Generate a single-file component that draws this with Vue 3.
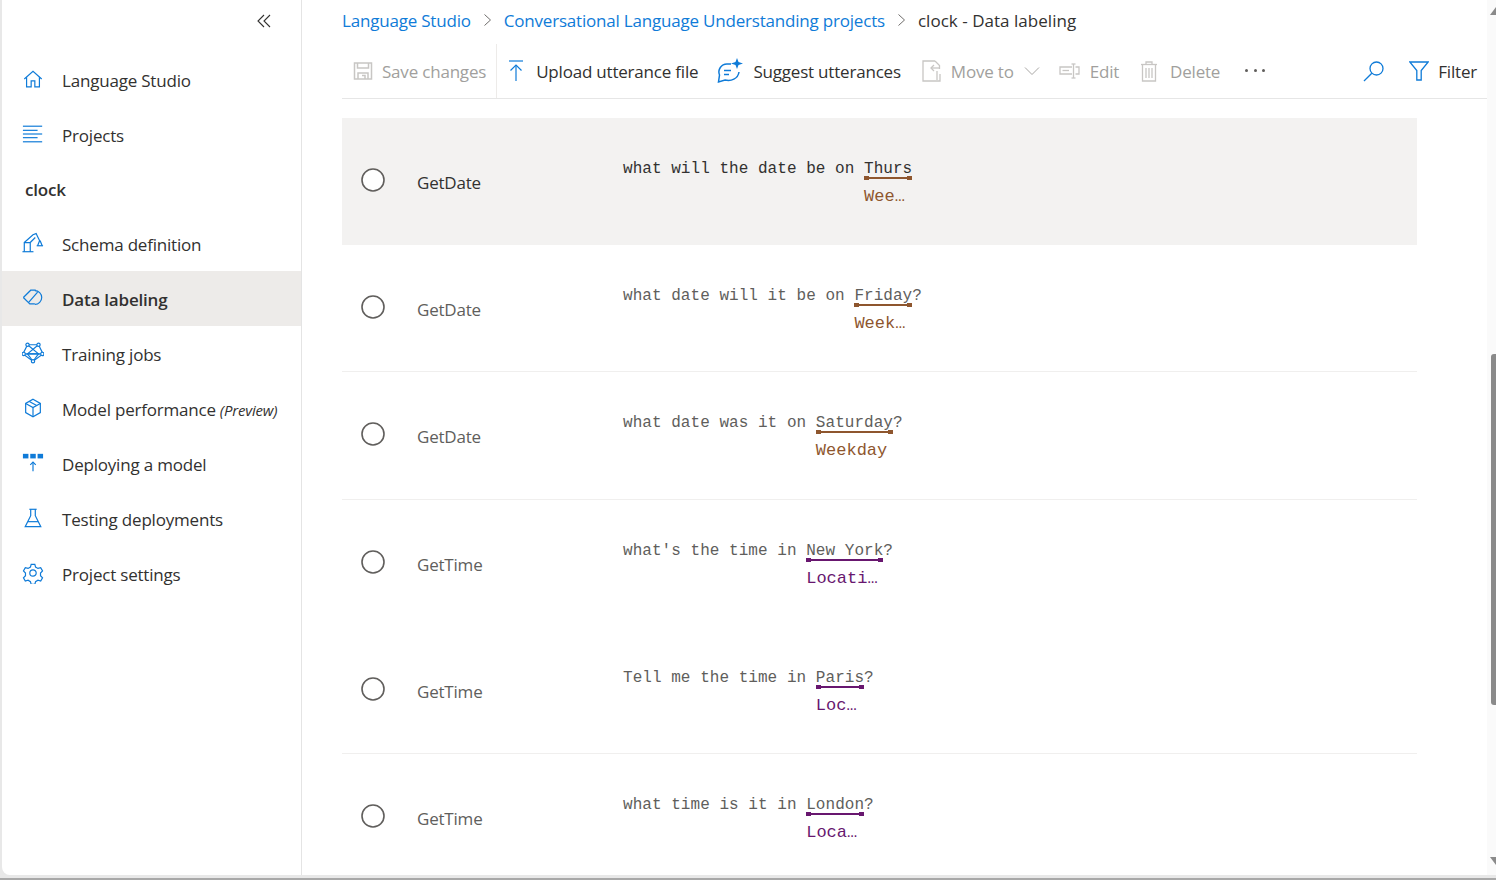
<script setup>
// Menú lateral: cada icono es una lista de trazos sobre una caja de 24x24
const menu = [
  { texto: 'Language Studio', icono: ['M2.5 12 12 3.5 21.5 12', 'M5 10v10.5h5V14h4v6.5h5V10'] },
  { texto: 'Projects', icono: ['M1 3.5h21', 'M1 8h16', 'M1 12h21', 'M1 16h16', 'M1 20.5h21'] },
  { titulo: 'clock' },
  {
    texto: 'Schema definition',
    icono: ['M.5 21.5h12', 'M2.5 21.5v-10h6.5v10', 'M2.5 11.5 12 3l4-1.5', 'M9 11.5 14.5 6', 'M15.5 2l4 8', 'M17 15l2-5 1 0 2 5', 'M16 15h7'],
  },
  {
    texto: 'Data labeling',
    activo: true,
    icono: ['M1.5 11.5 9.5 3.5H15', 'M1.5 11.5l7 7h5.5', 'M14 4a7.5 7.5 0 0 1 0 15', 'M7 17 17 5.5'],
  },
  {
    texto: 'Training jobs',
    icono: ['M6 3h12l5 10-11 8L1 13z', 'M6 3l12 10H1', 'M18 3 6 13h17', 'M12 21l-6-8', 'M12 21l6-8'],
    puntos: [[6, 3], [18, 3], [1.8, 13], [22.2, 13], [12, 21]],
  },
  { texto: 'Model performance', nota: '(Preview)', icono: ['M12 2.5 20 7v10l-8 4.5L4 17V7z', 'M4 7l8 4.5L20 7', 'M12 11.5v10', 'M8 4.8l8 4.5'] },
  { texto: 'Deploying a model', icono: ['M12 11v10', 'M9 14l3-3 3 3'], bloques: true },
  { texto: 'Testing deployments', icono: ['M8 2.5h8', 'M9.5 2.5v7L3.5 21.5h17L14.5 9.5v-7', 'M6.5 16h11'] },
  {
    texto: 'Project settings',
    icono: [
      'M10 2.5h4l.8 3 2.6 1.5 3-.8 2 3.5-2.2 2.3v3l2.2 2.2-2 3.5-3-.8-2.6 1.5-.8 3h-4l-.8-3-2.6-1.5-3 .8-2-3.5 2.2-2.2v-3L1.6 9.7l2-3.5 3 .8L9.2 5.5z',
      'M15.5 12a3.5 3.5 0 1 1-7 0 3.5 3.5 0 0 1 7 0z',
    ],
  },
]

const cafe = '#8e562e'
const morado = '#68176f'

const filas = [
  { intencion: 'GetDate', antes: 'what will the date be on ', entidad: 'Thurs', despues: '', etiqueta: 'Wee…', color: cafe, activa: true },
  { intencion: 'GetDate', antes: 'what date will it be on ', entidad: 'Friday', despues: '?', etiqueta: 'Week…', color: cafe },
  { intencion: 'GetDate', antes: 'what date was it on ', entidad: 'Saturday', despues: '?', etiqueta: 'Weekday', color: cafe },
  { intencion: 'GetTime', antes: "what's the time in ", entidad: 'New York', despues: '?', etiqueta: 'Locati…', color: morado, sinBorde: true },
  { intencion: 'GetTime', antes: 'Tell me the time in ', entidad: 'Paris', despues: '?', etiqueta: 'Loc…', color: morado },
  { intencion: 'GetTime', antes: 'what time is it in ', entidad: 'London', despues: '?', etiqueta: 'Loca…', color: morado },
]
</script>

<template>
  <div class="ventana">
    <aside class="lateral">
      <button class="colapsar">
        <svg width="16" height="16" viewBox="0 0 16 16" fill="none" stroke="#323130" stroke-width="1.1">
          <path d="M8 2 2 8l6 6" />
          <path d="M14 2 8 8l6 6" />
        </svg>
      </button>
      <nav class="menu">
        <template v-for="item in menu" :key="item.texto || item.titulo">
          <div v-if="item.titulo" class="menu-titulo">{{ item.titulo }}</div>
          <a v-else class="menu-item" :class="{ activo: item.activo }">
            <svg class="menu-icono" width="22" height="22" viewBox="0 0 24 24" fill="none" stroke="#0f7bd8" stroke-width="1.3">
              <path v-for="d in item.icono" :key="d" :d="d" />
              <circle v-for="p in item.puntos" :key="p[0] + '-' + p[1]" :cx="p[0]" :cy="p[1]" r="1.8" fill="#fff" />
              <g v-if="item.bloques" fill="#0f7bd8" stroke="none">
                <rect x="1" y="2" width="6" height="5" />
                <rect x="9" y="2" width="6" height="5" />
                <rect x="17" y="2" width="6" height="5" />
              </g>
            </svg>
            <span>{{ item.texto }}</span>
            <em v-if="item.nota" class="nota">{{ item.nota }}</em>
          </a>
        </template>
      </nav>
    </aside>

    <main class="principal">
      <div class="migas">
        <a class="miga-enlace">Language Studio</a>
        <svg class="miga-sep" width="12" height="16" viewBox="0 0 12 16" fill="none" stroke="#6f6d6b" stroke-width="1"><path d="M2.5 2.5 8.5 8l-6 5.5" /></svg>
        <a class="miga-enlace">Conversational Language Understanding projects</a>
        <svg class="miga-sep" width="12" height="16" viewBox="0 0 12 16" fill="none" stroke="#6f6d6b" stroke-width="1"><path d="M2.5 2.5 8.5 8l-6 5.5" /></svg>
        <span class="miga-actual">clock - Data labeling</span>
      </div>

      <div class="barra">
        <div class="accion apagada guardar">
          <svg width="20" height="20" viewBox="0 0 20 20" fill="none" stroke="#c8c6c4" stroke-width="1.5">
            <path d="M1.5 2h17v16h-17z" />
            <path d="M4.5 2v5h11V2" />
            <path d="M5 18v-6h10v6" />
            <path d="M9 14.5h3V18" />
          </svg>
          <span>Save changes</span>
        </div>
        <div class="accion subir">
          <svg width="16" height="22" viewBox="0 0 16 22" fill="none" stroke="#0f7bd8" stroke-width="1.2">
            <path d="M1 1h14" />
            <path d="M8 21V5" />
            <path d="M2.5 10.5 8 5l5.5 5.5" />
          </svg>
          <span>Upload utterance file</span>
        </div>
        <div class="accion sugerir">
          <svg width="26" height="26" viewBox="0 0 26 26" fill="none" stroke="#0f7bd8" stroke-width="1.5">
            <path d="M14 6H10a8 8 0 0 0-7.5 11L1.5 24l6.5-2c6 1.5 13-1 14-8" />
            <path d="M7 12.5h7" />
            <path d="M7 16.5h5" />
            <path d="M20 0l1.5 4 4.500 1.500-4.500 1.500L20 11l-1.500-4L14 5.500 18.500 4z" fill="#0f7bd8" stroke="none" />
          </svg>
          <span>Suggest utterances</span>
        </div>
        <div class="accion apagada mover">
          <svg width="20" height="22" viewBox="0 0 20 22" fill="none" stroke="#c8c6c4" stroke-width="1.3">
            <path d="M13 1H1v20h17v-7" />
            <path d="M13 1l4.5 4.5V9" />
            <path d="M9 8h9" />
            <path d="M12 5 9 8l3 3" />
            <path d="M15 11v9" />
          </svg>
          <span>Move to</span>
          <svg class="flecha" width="16" height="10" viewBox="0 0 16 10" fill="none" stroke="#a8a6a4" stroke-width="1"><path d="M1 1.5 8 8.5l7-7" /></svg>
        </div>
        <div class="accion apagada editar">
          <svg width="21" height="16" viewBox="0 0 21 16" fill="none" stroke="#c8c6c4" stroke-width="1.3">
            <path d="M13 4H1v7h12" />
            <path d="M3.5 7.5H10" />
            <path d="M14.5 1v14" />
            <path d="M12.5 1h4" />
            <path d="M12.5 15h4" />
            <path d="M16.5 4H20v7h-3.5" />
          </svg>
          <span>Edit</span>
        </div>
        <div class="accion apagada borrar">
          <svg width="16" height="21" viewBox="0 0 16 21" fill="none" stroke="#c8c6c4" stroke-width="1.3">
            <path d="M0 3.5h16" />
            <path d="M5 3.5V1h6v2.5" />
            <path d="M1.5 3.5V20h13V3.5" />
            <path d="M5 7v10" />
            <path d="M8 7v10" />
            <path d="M11 7v10" />
          </svg>
          <span>Delete</span>
        </div>
        <div class="puntos"><i /><i /><i /></div>
        <div class="barra-derecha">
          <svg class="lupa" width="21" height="21" viewBox="0 0 21 21" fill="none" stroke="#0f7bd8" stroke-width="1.3">
            <circle cx="13.5" cy="7.5" r="6.5" />
            <path d="M8.8 12.2 1 20" />
          </svg>
          <div class="accion filtro">
            <svg width="20" height="20" viewBox="0 0 20 20" fill="none" stroke="#0f7bd8" stroke-width="1.3">
              <path d="M.8 1h18.4l-7 8.5V19H7.800V9.500z" />
            </svg>
            <span>Filter</span>
          </div>
        </div>
      </div>

      <div class="lista">
        <div
          v-for="fila in filas"
          :key="fila.antes"
          class="fila"
          :class="{ activa: fila.activa, 'sin-borde': fila.sinBorde }"
        >
          <svg class="radio" width="24" height="24" viewBox="0 0 24 24" fill="#fff" stroke="#605e5c" stroke-width="1.6">
            <circle cx="12" cy="12" r="11" />
          </svg>
          <span class="intencion">{{ fila.intencion }}</span>
          <div class="frase">{{ fila.antes }}<span class="entidad">{{ fila.entidad }}<span class="marca" :style="{ background: fila.color }" /><span class="etiqueta" :style="{ color: fila.color }">{{ fila.etiqueta }}</span></span>{{ fila.despues }}</div>
        </div>
      </div>
    </main>

    <div class="scroll">
      <span class="scroll-arriba" />
      <div class="scroll-pista"><span class="scroll-pulgar" /></div>
      <span class="scroll-abajo" />
    </div>
  </div>
</template>

<style>
html,
body {
  margin: 0;
  height: 880px;
  overflow: hidden;
  background: linear-gradient(#e8e8e8 878px, #a8a8a8 878px);
}
</style>

<style scoped>
.ventana {
  box-sizing: border-box;
  width: 1494px;
  height: 875px;
  margin-left: 2px;
  display: flex;
  background: #fff;
  border-bottom-left-radius: 8px;
  overflow: hidden;
  font-family: "Open Sans", "Noto Sans", sans-serif;
  font-size: 17px;
  color: #323130;
  letter-spacing: -0.2px;
}

.lateral {
  width: 299px;
  flex: none;
  border-right: 1px solid #e4e4e4;
  height: 100%;
}

.colapsar {
  display: block;
  margin: 13px 0 0 254px;
  padding: 0;
  background: none;
  border: 0;
  height: 16px;
}

.menu {
  margin-top: 23px;
  display: flex;
  flex-direction: column;
}

.menu-item,
.menu-titulo {
  display: flex;
  align-items: center;
}

.menu-item {
  height: 55px;
  box-sizing: border-box;
  padding: 2px 0 0 20px;
}

.menu-item.activo {
  background: #edebe9;
  font-weight: 600;
}

.menu-icono {
  width: 22px;
  flex: none;
  margin-right: 18px;
  position: relative;
  top: -2px;
}

.menu-titulo {
  padding-left: 23px;
  font-weight: 600;
  height: 54px;
}

.nota {
  font-size: 15px;
  margin-left: 4px;
}

.principal {
  flex: none;
  width: 1145px;
  padding-left: 40px;
  min-width: 0;
}

.migas {
  height: 40px;
  margin-bottom: 4px;
  display: flex;
  align-items: center;
  white-space: nowrap;
}

.miga-enlace {
  color: #0f7bd8;
}

.miga-actual {
  letter-spacing: 0.03px;
}

.miga-sep {
  margin: 0 10px 0 11px;
}

.barra {
  height: 55px;
  box-sizing: border-box;
  border-bottom: 1px solid #e6e6e6;
  display: flex;
  align-items: center;
  white-space: nowrap;
}

.accion {
  display: flex;
  align-items: center;
  height: 100%;
}

.accion svg {
  flex: none;
  margin-right: 9px;
}

.apagada {
  color: #a19f9d;
}

.guardar {
  padding: 0 10px 0 11px;
  border-right: 1px solid #edebe9;
}

.subir {
  margin-left: 11px;
}

.subir svg {
  margin-right: 12px;
}

.sugerir {
  margin-left: 19px;
}

.sugerir svg {
  margin-right: 10px;
}

.mover {
  margin-left: 21px;
}

.accion .flecha {
  margin: 0 0 0 10px;
}

.editar {
  margin-left: 19px;
}

.editar svg {
  margin-right: 10px;
}

.borrar {
  margin-left: 22px;
}

.borrar svg {
  margin-right: 13px;
}

.puntos {
  display: flex;
  gap: 5.5px;
  margin: -2px 0 0 25px;
}

.puntos i {
  width: 3px;
  height: 3px;
  border-radius: 50%;
  background: #605e5c;
}

.barra-derecha {
  margin-left: auto;
  display: flex;
  align-items: center;
  height: 100%;
}

.lupa {
  margin-right: 25px;
}

.filtro {
  padding-right: 10px;
}

.filtro svg {
  margin-right: 9px;
}

.lista {
  width: 1075px;
  margin-top: 19px;
}

.fila {
  height: 127.2px;
  box-sizing: border-box;
  border-bottom: 1px solid #f0efee;
  display: flex;
  color: #605e5c;
}

.fila.activa {
  background: #f3f2f1;
  color: #323130;
  border-bottom-color: #f3f2f1;
}

.fila.sin-borde {
  border-bottom-color: transparent;
}

.radio {
  margin: 50px 0 0 18.5px;
  flex: none;
}

.intencion {
  flex: none;
  width: 206px;
  margin: 53px 0 0 32.5px;
  line-height: 24px;
}

.frase {
  margin-top: 40px;
  font-family: "Liberation Mono", monospace;
  font-size: 16px;
  letter-spacing: 0.04px;
  line-height: 22px;
  white-space: pre;
}

.entidad {
  position: relative;
  display: inline-block;
}

.marca {
  position: absolute;
  left: 0;
  right: 0;
  top: 19px;
  height: 2px;
}

.marca::before,
.marca::after {
  content: "";
  position: absolute;
  top: -1px;
  width: 5px;
  height: 4px;
  background: inherit;
}

.marca::before {
  left: 0;
}

.marca::after {
  right: 0;
}

.etiqueta {
  position: absolute;
  left: 0;
  top: 28px;
  font-size: 17px;
  letter-spacing: 0;
}

.scroll {
  width: 9px;
  flex: none;
  margin-left: auto;
  background: #fafafa;
  display: flex;
  flex-direction: column;
  height: 880px;
  overflow: hidden;
}

.scroll-arriba,
.scroll-abajo {
  flex: none;
  width: 0;
  height: 0;
  margin-left: 3px;
  border-left: 6px solid transparent;
  border-right: 6px solid transparent;
}

.scroll-arriba {
  margin-top: 7px;
  border-bottom: 8px solid #8a8a8a;
}

.scroll-abajo {
  margin-bottom: 15px;
  border-top: 8px solid #8a8a8a;
}

.scroll-pista {
  flex: 1;
  padding-top: 339px;
}

.scroll-pulgar {
  display: block;
  width: 6px;
  height: 351px;
  margin-left: 4px;
  border-radius: 3px 0 0 3px;
  background: #8a8a8a;
}
</style>
